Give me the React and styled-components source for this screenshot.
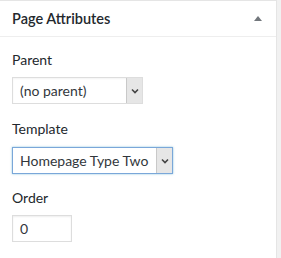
import React from "react";
import styled, { createGlobalStyle } from "styled-components";

const Global = createGlobalStyle`
  html, body { margin: 0; padding: 0; background: #f1f1f1; }
  body { font-family: "Lato", "Noto Sans", sans-serif; color: #23282d; }
`;

const Panel = styled.div`
  width: 277px;
  height: 258px;
  box-sizing: border-box;
  background: #fff;
  border-top: 1px solid #e5e5e5;
  border-right: 1px solid #e5e5e5;
`;

const Header = styled.div`
  height: 36px;
  box-sizing: border-box;
  border-bottom: 1px solid #eeeeee;
  display: flex;
  align-items: center;
  justify-content: space-between;
  padding: 0 14px 1px 12px;
`;

const Title = styled.h2`
  margin: 0;
  font-size: 14.5px;
  font-weight: 600;
  color: #23282d;
`;

const Toggle = styled.span`
  width: 0;
  height: 0;
  border-left: 4px solid transparent;
  border-right: 4px solid transparent;
  border-bottom: 5px solid #72777c;
  margin-top: 1px;
`;

const Body = styled.div`
  padding: 14px 12px 0 12px;
  display: flex;
  flex-direction: column;
`;

const Label = styled.div`
  font-size: 14px;
  line-height: 18px;
  color: #23282d;
  margin-bottom: ${(p) => p.$gap}px;
`;

const SelectBox = styled.div`
  width: ${(p) => p.$w}px;
  height: 27px;
  box-sizing: border-box;
  border: 1px solid ${(p) => (p.$focus ? "#7aa7d9" : "#dddddd")};
  box-shadow: ${(p) => (p.$focus ? "0 0 2px rgba(30,140,190,.5)" : "inset 0 1px 2px rgba(0,0,0,.05)")};
  display: flex;
  align-items: stretch;
  margin-bottom: ${(p) => p.$mb}px;
  background: #fff;
`;

const SelectText = styled.span`
  flex: 1;
  font-size: 14px;
  line-height: 25px;
  padding-left: 7px;
  color: #32373c;
  white-space: nowrap;
  overflow: hidden;
`;

const Arrow = styled.span`
  width: 16px;
  box-sizing: border-box;
  background: #e6e6e6;
  border-left: 1px solid #c9c9c9;
  display: flex;
  align-items: center;
  justify-content: center;
`;

const Input = styled.div`
  width: 60px;
  height: 27px;
  box-sizing: border-box;
  border: 1px solid #dddddd;
  box-shadow: inset 0 1px 2px rgba(0,0,0,.07);
  font-size: 14px;
  line-height: 25px;
  padding-left: 7px;
  color: #32373c;
`;

const Chevron = () => (
  <svg width="8" height="6" viewBox="0 0 8 6">
    <path d="M1 1.5 L4 4.5 L7 1.5" fill="none" stroke="#444" strokeWidth="1.6" />
  </svg>
);

export default function App() {
  return (
    <>
      <Global />
      <Panel>
        <Header>
          <Title>Page Attributes</Title>
          <Toggle />
        </Header>
        <Body>
          <Label $gap={8}>Parent</Label>
          <SelectBox $w={131} $mb={16}>
            <SelectText>(no parent)</SelectText>
            <Arrow><Chevron /></Arrow>
          </SelectBox>
          <Label $gap={9}>Template</Label>
          <SelectBox $w={161} $mb={15} $focus>
            <SelectText>Homepage Type Two</SelectText>
            <Arrow><Chevron /></Arrow>
          </SelectBox>
          <Label $gap={8}>Order</Label>
          <Input>0</Input>
        </Body>
      </Panel>
    </>
  );
}
